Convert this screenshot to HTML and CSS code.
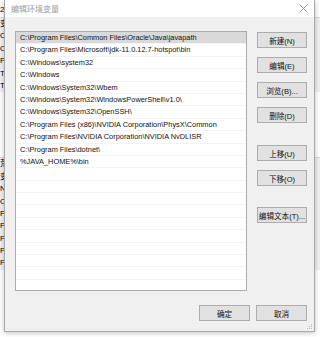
FILE: index.html
```html
<!DOCTYPE html>
<html lang="zh-CN">
<head>
  <meta charset="UTF-8" />
  <title>编辑环境变量</title>
  <link rel="stylesheet" href="styles.css">
</head>
<body>
  <div class="desk">
    <!-- window behind the dialog, only its edges show -->
    <div class="backwin">
      <div class="back-top">2</div>
      <ul class="back-list">
        <li>变</li>
        <li>O</li>
        <li>O</li>
        <li>P</li>
        <li>TE</li>
        <li>T</li>
      </ul>
      <ul class="back-list back-list2">
        <li>荒</li>
        <li>变</li>
        <li>N</li>
        <li>O</li>
        <li>P</li>
        <li>PA</li>
        <li>PF</li>
        <li>P</li>
        <li>P</li>
      </ul>
    </div>

    <div class="dialog">
      <div class="titlebar">
        <span class="title">编辑环境变量</span>
        <svg class="close" width="9" height="9" viewBox="0 0 9 9">
          <path d="M0.5 0.5 L8.5 8.5 M8.5 0.5 L0.5 8.5" stroke="#9a9a9a" stroke-width="1" />
        </svg>
      </div>
      <div class="body">
        <div class="main">
          <ul class="paths" id="paths"></ul>
          <div class="side">
            <button class="btn">新建(N)</button>
            <button class="btn">编辑(E)</button>
            <button class="btn">浏览(B)...</button>
            <button class="btn">删除(D)</button>
            <button class="btn gap">上移(U)</button>
            <button class="btn">下移(O)</button>
            <button class="btn gap2">编辑文本(T)...</button>
          </div>
        </div>
        <div class="footer">
          <button class="btn">确定</button>
          <button class="btn">取消</button>
        </div>
      </div>
      <svg class="grip" width="6" height="6" viewBox="0 0 6 6">
        <rect x="4" y="0" width="1" height="1" fill="#b5b5b5" />
        <rect x="2" y="2" width="1" height="1" fill="#b5b5b5" />
        <rect x="4" y="2" width="1" height="1" fill="#b5b5b5" />
        <rect x="0" y="4" width="1" height="1" fill="#b5b5b5" />
        <rect x="2" y="4" width="1" height="1" fill="#b5b5b5" />
        <rect x="4" y="4" width="1" height="1" fill="#b5b5b5" />
      </svg>
    </div>
  </div>

  <script>
    const paths = [
      'C:\\Program Files\\Common Files\\Oracle\\Java\\javapath',
      'C:\\Program Files\\Microsoft\\jdk-11.0.12.7-hotspot\\bin',
      'C:\\Windows\\system32',
      'C:\\Windows',
      'C:\\Windows\\System32\\Wbem',
      'C:\\Windows\\System32\\WindowsPowerShell\\v1.0\\',
      'C:\\Windows\\System32\\OpenSSH\\',
      'C:\\Program Files (x86)\\NVIDIA Corporation\\PhysX\\Common',
      'C:\\Program Files\\NVIDIA Corporation\\NVIDIA NvDLISR',
      'C:\\Program Files\\dotnet\\',
      '%JAVA_HOME%\\bin'
    ];

    const list = document.getElementById('paths');
    for (let i = 0; i < 21; i++) {
      const li = document.createElement('li');
      li.className = 'row';
      if (i === 0) li.classList.add('selected');
      li.textContent = paths[i] || '';
      list.appendChild(li);
    }
  </script>
</body>
</html>
```

FILE: styles.css
```css
body {
  margin: 0;
  font-family: 'Liberation Sans', 'Noto Sans CJK SC', sans-serif;
  font-size: 8px;
  color: #000;
}
.desk {
  position: relative;
  width: 320px;
  height: 337px;
  overflow: hidden;
  background: #f0f0f0;
}
.backwin {
  position: absolute;
  left: 0;
  top: 0;
  width: 320px;
  height: 337px;
  background: #fff;
  border-bottom: 1px solid #ddd;
}
.back-top {
  margin: 5px 0 0 0;
  height: 12px;
  font-size: 8px;
}
.back-list {
  list-style: none;
  margin: 0;
  padding: 0;
  background: #f0f0f0;
  border-top: 1px solid #d9d9d9;
}
.back-list li {
  height: 12.4px;
  line-height: 12.4px;
  font-size: 8px;
}
.back-list2 {
  margin-top: 65px;
}
.dialog {
  position: absolute;
  left: 4px;
  top: 0;
  width: 309px;
  height: 331px;
  border: 1px solid #a9a9a9;
  border-top: none;
  background: #f0f0f0;
  box-shadow: 0 1px 5px rgba(0, 0, 0, 0.25);
  display: flex;
  flex-direction: column;
}
.titlebar {
  height: 17px;
  background: #fff;
  display: flex;
  align-items: center;
  justify-content: space-between;
  padding: 0 5px 0 6px;
}
.title {
  color: #9b9b9b;
  font-size: 8px;
}
.close {
  margin-right: 1px;
}
.body {
  flex: 1;
  display: flex;
  flex-direction: column;
  padding: 14px 7px 10px 10px;
}
.main {
  display: flex;
  gap: 10px;
}
.paths {
  list-style: none;
  margin: 0;
  padding: 0;
  width: 230px;
  height: 258px;
  border: 1px solid #acacac;
  background: #fff;
  overflow: hidden;
  font-size: 7.4px;
  color: #111;
}
.row {
  box-sizing: border-box;
  height: 12.4px;
  line-height: 12px;
  padding-left: 4px;
  border-bottom: 1px solid #f3f3f3;
  white-space: nowrap;
}
.row.selected {
  background: #d9d9d9;
}
.side {
  display: flex;
  flex-direction: column;
  gap: 9px;
  padding-top: 1px;
}
.btn {
  width: 50px;
  height: 16px;
  padding: 0;
  border: 1px solid #adadad;
  background: #e1e1e1;
  font-family: 'Liberation Sans', 'Noto Sans CJK SC', sans-serif;
  font-size: 7.6px;
  color: #111;
  white-space: nowrap;
}
.btn.gap {
  margin-top: 13px;
}
.btn.gap2 {
  margin-top: 12px;
}
.footer {
  margin-top: auto;
  display: flex;
  justify-content: flex-end;
  gap: 6px;
}
.footer .btn {
  width: 51px;
}
.grip {
  position: absolute;
  right: 1px;
  bottom: 1px;
}
```
